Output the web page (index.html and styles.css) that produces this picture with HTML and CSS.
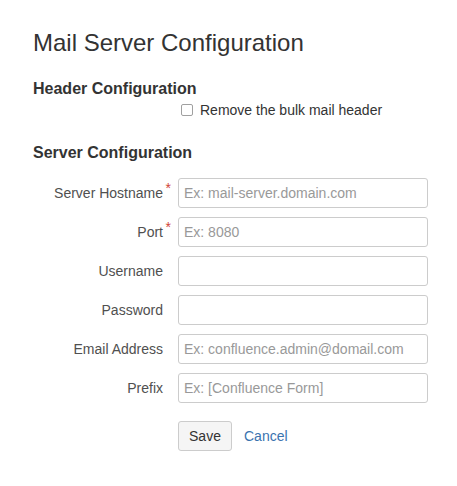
FILE: index.html
```html
<!DOCTYPE html>
<html>
<head>
<meta charset="utf-8">
<link rel="stylesheet" href="styles.css">
</head>
<body>
<div class="page">
  <h1 class="title">Mail Server Configuration</h1>
  <h2 class="section section-header">Header Configuration</h2>
  <div class="row row-check">
    <div class="label"></div>
    <label class="check">
      <input type="checkbox" class="checkbox">
      <span>Remove the bulk mail header</span>
    </label>
  </div>
  <h2 class="section section-server">Server Configuration</h2>
  <div class="fields">
    <div class="row">
      <label class="label">Server Hostname<span class="req">*</span></label>
      <input class="text" type="text" placeholder="Ex: mail-server.domain.com">
    </div>
    <div class="row">
      <label class="label">Port<span class="req">*</span></label>
      <input class="text" type="text" placeholder="Ex: 8080">
    </div>
    <div class="row">
      <label class="label">Username</label>
      <input class="text" type="text">
    </div>
    <div class="row">
      <label class="label">Password</label>
      <input class="text" type="password">
    </div>
    <div class="row">
      <label class="label">Email Address</label>
      <input class="text" type="text" placeholder="Ex: confluence.admin@domail.com">
    </div>
    <div class="row">
      <label class="label">Prefix</label>
      <input class="text" type="text" placeholder="Ex: [Confluence Form]">
    </div>
  </div>
  <div class="row row-buttons">
    <div class="label"></div>
    <div class="buttons">
      <button class="btn" type="button">Save</button>
      <a class="cancel" href="#">Cancel</a>
    </div>
  </div>
</div>
</body>
</html>
```
FILE: styles.css
```css
html, body {
  margin: 0;
  padding: 0;
  background: #fff;
}
body {
  font-family: "Liberation Sans", Arial, sans-serif;
  font-size: 14px;
  line-height: 20px;
  color: #333;
}
.page {
  padding: 29px 0 0 33px;
}
.title {
  margin: 0;
  font-size: 24px;
  line-height: 28px;
  font-weight: normal;
  color: #333;
}
.section {
  margin: 0;
  font-size: 16px;
  line-height: 20px;
  font-weight: bold;
  color: #333;
}
.section-header {
  margin-top: 22px;
}
.section-server {
  margin-top: 23px;
}
.row {
  display: flex;
  align-items: center;
}
.label {
  position: relative;
  flex: 0 0 130px;
  width: 130px;
  margin-right: 15px;
  text-align: right;
  color: #505050;
}
.req {
  position: absolute;
  right: -8px;
  top: -5px;
  color: #d04437;
  font-size: 14px;
  line-height: 20px;
}
.row-check {
  margin-top: 1px;
}
.check {
  display: flex;
  align-items: center;
  gap: 7px;
  padding-left: 3px;
  color: #333;
}
.checkbox {
  appearance: none;
  -webkit-appearance: none;
  margin: 0;
  width: 12px;
  height: 12px;
  border: 1px solid #a0a0a0;
  border-radius: 2px;
  background: #fff;
  box-sizing: border-box;
}
.fields {
  margin-top: 15px;
  display: flex;
  flex-direction: column;
  gap: 9px;
}
.text {
  box-sizing: border-box;
  width: 250px;
  height: 30px;
  margin: 0;
  padding: 4px 5px;
  border: 1px solid #ccc;
  border-radius: 3px;
  font-family: "Liberation Sans", Arial, sans-serif;
  font-size: 14px;
  color: #333;
  background: #fff;
  outline: none;
}
.text::placeholder {
  color: #999;
  opacity: 1;
}
.row-buttons {
  margin-top: 18px;
}
.buttons {
  display: flex;
  align-items: center;
  gap: 12px;
}
.btn {
  box-sizing: border-box;
  height: 30px;
  width: 54px;
  margin: 0;
  padding: 0 10px;
  border: 1px solid #ccc;
  border-radius: 3px;
  background: #f5f5f5;
  font-family: "Liberation Sans", Arial, sans-serif;
  font-size: 14px;
  color: #333;
}
.cancel {
  color: #3b73af;
  text-decoration: none;
  font-size: 14px;
}
```
